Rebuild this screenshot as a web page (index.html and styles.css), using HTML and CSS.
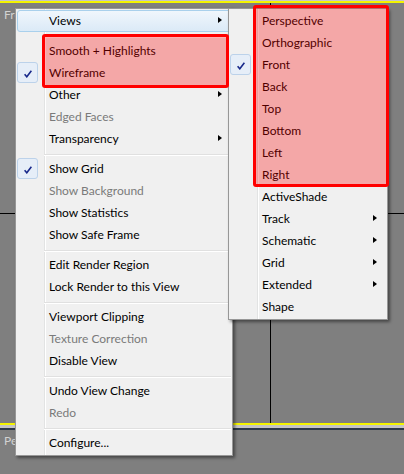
FILE: index.html
```html
<!DOCTYPE html>
<html lang="en">
<head>
    <meta charset="UTF-8">
    <meta name="viewport" content="width=device-width, initial-scale=1.0">
    <title>Viewport Menu</title>
    <link rel="stylesheet" href="styles.css">
</head>
<body>
    <div class="viewport active">
        <span class="viewport-label">Front</span>
        <div class="axis axis-x"></div>
        <div class="axis axis-y"></div>
    </div>
    <div class="viewport-split"></div>
    <div class="viewport">
        <span class="viewport-label">Perspective</span>
    </div>

    <ul class="menu main-menu">
        <li class="item open">Views<span class="arrow"></span></li>
        <li class="sep"></li>
        <li class="item">Smooth + Highlights</li>
        <li class="item"><span class="check"><svg width="8" height="8" viewBox="0 0 8 8"><path d="M0.6 4.2 L2.8 6.8 L7.4 0.8"/></svg></span>Wireframe</li>
        <li class="item">Other<span class="arrow"></span></li>
        <li class="item disabled">Edged Faces</li>
        <li class="item">Transparency<span class="arrow"></span></li>
        <li class="sep"></li>
        <li class="item"><span class="check"><svg width="8" height="8" viewBox="0 0 8 8"><path d="M0.6 4.2 L2.8 6.8 L7.4 0.8"/></svg></span>Show Grid</li>
        <li class="item disabled">Show Background</li>
        <li class="item">Show Statistics</li>
        <li class="item">Show Safe Frame</li>
        <li class="sep"></li>
        <li class="item">Edit Render Region</li>
        <li class="item">Lock Render to this View</li>
        <li class="sep"></li>
        <li class="item">Viewport Clipping</li>
        <li class="item disabled">Texture Correction</li>
        <li class="item">Disable View</li>
        <li class="sep"></li>
        <li class="item">Undo View Change</li>
        <li class="item disabled">Redo</li>
        <li class="sep"></li>
        <li class="item">Configure...</li>
    </ul>

    <ul class="menu sub-menu">
        <li class="item">Perspective</li>
        <li class="item">Orthographic</li>
        <li class="item"><span class="check"><svg width="8" height="8" viewBox="0 0 8 8"><path d="M0.6 4.2 L2.8 6.8 L7.4 0.8"/></svg></span>Front</li>
        <li class="item">Back</li>
        <li class="item">Top</li>
        <li class="item">Bottom</li>
        <li class="item">Left</li>
        <li class="item">Right</li>
        <li class="item">ActiveShade</li>
        <li class="item">Track<span class="arrow"></span></li>
        <li class="item">Schematic<span class="arrow"></span></li>
        <li class="item">Grid<span class="arrow"></span></li>
        <li class="item">Extended<span class="arrow"></span></li>
        <li class="item">Shape</li>
    </ul>

    <!-- highlight boxes -->
    <div class="mark mark-shading"></div>
    <div class="mark mark-views"></div>
</body>
</html>
```

FILE: styles.css
```css
body {
    margin: 0;
    height: 474px;
    overflow: hidden;
    position: relative;
    background-color: #7f7f7f;
    font-family: "Segoe UI", Lato, sans-serif;
    font-size: 12px;
}

/* viewports */
.viewport {
    position: relative;
    height: 44px;
    padding: 3px 0 0 4px;
    box-sizing: border-box;
}

.viewport.active {
    height: 424px;
    margin-top: 1px;
    padding-top: 4px;
    border-top: 2px solid #f4f400;
    border-bottom: 2px solid #f4f400;
    box-shadow: 0 -1px 0 #c6c6c6;
}

.viewport-label {
    color: #d2d2d2;
    line-height: 14px;
}

.viewport-split {
    height: 3px;
    background-color: #c4c4c4;
    border-bottom: 2px solid #2c3848;
}

.axis {
    position: absolute;
    background-color: #000;
}

.axis-x {
    left: 0;
    right: 0;
    top: 210px;
    height: 1px;
}

.axis-y {
    top: 0;
    bottom: 0;
    left: 270px;
    width: 1px;
}

/* popup menus */
.menu {
    position: absolute;
    margin: 0;
    padding: 1px;
    list-style: none;
    box-sizing: border-box;
    border: 1px solid #979797;
    background-color: #f0f0f0;
    background-image: linear-gradient(to right,
        transparent 28px, #e2e3e3 28px, #e2e3e3 29px,
        #fff 29px, #fff 30px, transparent 30px);
    box-shadow: 2px 2px 3px rgba(0, 0, 0, 0.45);
}

.main-menu {
    left: 15px;
    top: 8px;
    width: 218px;
}

.sub-menu {
    left: 228px;
    top: 8px;
    width: 160px;
}

.item {
    position: relative;
    height: 22px;
    line-height: 22px;
    padding-left: 32px;
    color: #000;
    white-space: nowrap;
}

.item.disabled {
    color: #7a7a7a;
}

.item.open {
    box-sizing: border-box;
    line-height: 20px;
    padding-left: 31px;
    border: 1px solid #a9d0ec;
    border-radius: 3px;
    background: linear-gradient(#f0f6fc, #dbeaf7);
}

.arrow {
    position: absolute;
    right: 9px;
    top: 7px;
    width: 0;
    height: 0;
    border-left: 4px solid #000;
    border-top: 3.5px solid transparent;
    border-bottom: 3.5px solid transparent;
}

.item.open .arrow {
    right: 8px;
    top: 6px;
}

.check {
    position: absolute;
    left: 0;
    top: 0;
    width: 21px;
    height: 21px;
    box-sizing: border-box;
    padding: 7px 0 0 6px;
    border: 1px solid #bcd2ea;
    border-radius: 3px;
    background-color: #e6eef8;
}

.check svg {
    display: block;
}

.check path {
    fill: none;
    stroke: #18288a;
    stroke-width: 1.6;
}

.sep {
    height: 1px;
    margin: 4px 0 2px 27px;
    background-color: #e0e0e0;
    border-bottom: 1px solid #fff;
}

/* red annotation boxes */
.mark {
    position: absolute;
    box-sizing: border-box;
    border: 3px solid #ff0000;
    border-radius: 3px;
    background-color: rgba(255, 0, 0, 0.3);
}

.mark-shading {
    left: 42px;
    top: 34px;
    width: 187px;
    height: 54px;
}

.mark-views {
    left: 253px;
    top: 5px;
    width: 136px;
    height: 182px;
}
```
